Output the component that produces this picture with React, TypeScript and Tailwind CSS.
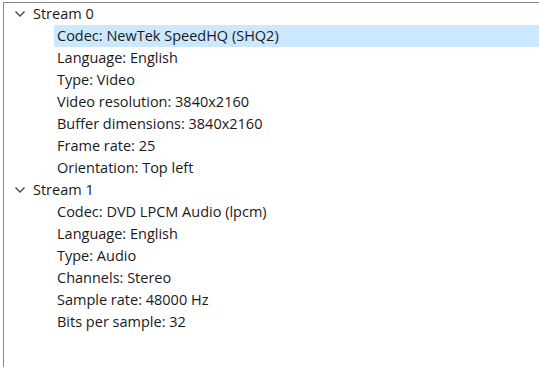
const streams = [
  {
    name: 'Stream 0',
    props: [
      'Codec: NewTek SpeedHQ (SHQ2)',
      'Language: English',
      'Type: Video',
      'Video resolution: 3840x2160',
      'Buffer dimensions: 3840x2160',
      'Frame rate: 25',
      'Orientation: Top left',
    ],
  },
  {
    name: 'Stream 1',
    props: [
      'Codec: DVD LPCM Audio (lpcm)',
      'Language: English',
      'Type: Audio',
      'Channels: Stereo',
      'Sample rate: 48000 Hz',
      'Bits per sample: 32',
    ],
  },
];

const Chevron = () => (
  <svg width="10" height="6" viewBox="0 0 10 6" className="text-[#444]">
    <path d="M0.5 0.5 L5 5 L9.5 0.5" fill="none" stroke="currentColor" strokeWidth="1.3" />
  </svg>
);

export default function App() {
  return (
    <div className="w-[539px] h-[367px] bg-white pl-[3px] pt-[2px] overflow-hidden">
      <div
        className="h-full border-l border-t border-[#828790] text-[14.5px] text-[#1a1a1a] leading-[22px]"
        style={{ fontFamily: '"Segoe UI", "Open Sans", sans-serif' }}
      >
        {streams.map((s) => (
          <div key={s.name}>
            <div className="flex items-center h-[22px]">
              <div className="w-[29px] flex justify-center pl-[2px]">
                <Chevron />
              </div>
              <span>{s.name}</span>
            </div>
            {s.props.map((p, i) => (
              <div key={p} className="h-[22px] pl-[50px]">
                <div className={'h-full pl-[3px] ' + (s.name === 'Stream 0' && i === 0 ? 'bg-[#cce8ff]' : '')}>
                  {p}
                </div>
              </div>
            ))}
          </div>
        ))}
      </div>
    </div>
  );
}
